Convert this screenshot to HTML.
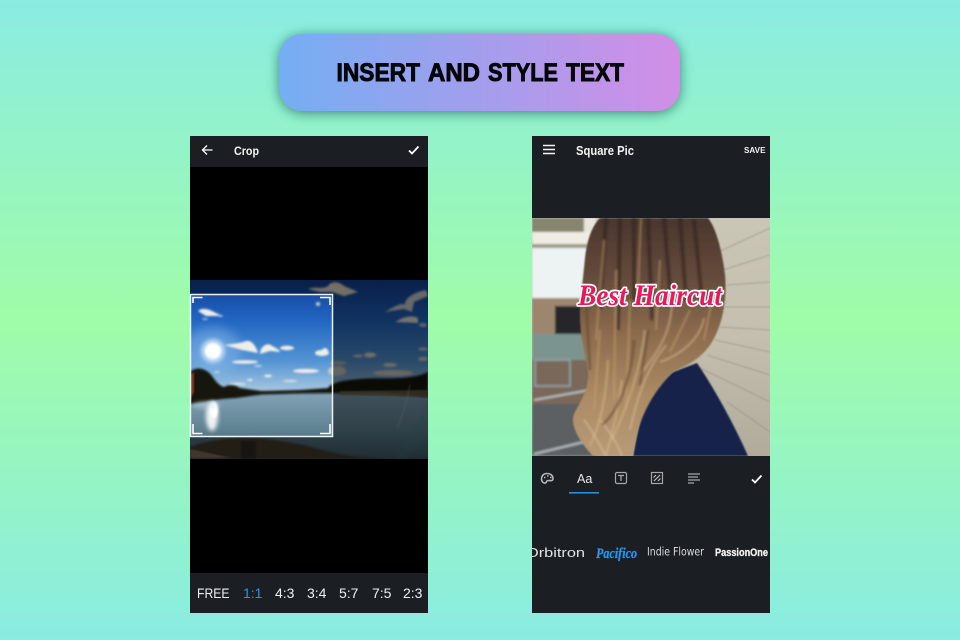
<!DOCTYPE html>
<html><head><meta charset="utf-8"><style>
html,body{margin:0;padding:0;width:960px;height:640px;overflow:hidden;background:#8cebe0}
svg{display:block}
text{font-family:"Liberation Sans",sans-serif}
</style></head><body>
<svg width="960" height="640" viewBox="0 0 960 640" xmlns="http://www.w3.org/2000/svg">
<defs>
<linearGradient id="bg" x1="0" y1="0" x2="0" y2="1"><stop offset="0" stop-color="#8aecE2"/><stop offset=".5" stop-color="#a0fca8"/><stop offset="1" stop-color="#8aecE2"/></linearGradient>
<linearGradient id="ban" x1="0" y1="0" x2="1" y2="0"><stop offset="0" stop-color="#74aef3"/><stop offset="1" stop-color="#d28ee6"/></linearGradient>
<linearGradient id="sky" x1="0" y1="0" x2="0" y2="1"><stop offset="0" stop-color="#113f94"/><stop offset=".35" stop-color="#2166c2"/><stop offset=".7" stop-color="#5494d4"/><stop offset="1" stop-color="#b4cfe2"/></linearGradient>
<linearGradient id="lake" x1="0" y1="0" x2="0" y2="1"><stop offset="0" stop-color="#83a2b6"/><stop offset=".55" stop-color="#5f8293"/><stop offset="1" stop-color="#3f5a66"/></linearGradient>
<linearGradient id="hair" x1="0" y1="0" x2="0" y2="1"><stop offset="0" stop-color="#49362d"/><stop offset=".25" stop-color="#654b3b"/><stop offset=".5" stop-color="#8d6d4e"/><stop offset=".75" stop-color="#ab8b64"/><stop offset="1" stop-color="#b89a76"/></linearGradient>
<linearGradient id="sid" x1="0" y1="0" x2="0" y2="1"><stop offset="0" stop-color="#cac6b6"/><stop offset=".5" stop-color="#c4bfae"/><stop offset="1" stop-color="#b0ab9b"/></linearGradient>
<filter id="b1" x="-30%" y="-30%" width="160%" height="160%"><feGaussianBlur stdDeviation=".7"/></filter>
<filter id="b15" x="-30%" y="-30%" width="160%" height="160%"><feGaussianBlur stdDeviation="1"/></filter>
<filter id="b2" x="-30%" y="-30%" width="160%" height="160%"><feGaussianBlur stdDeviation="2"/></filter>
<filter id="b3" x="-50%" y="-50%" width="200%" height="200%"><feGaussianBlur stdDeviation="5"/></filter>
<filter id="sh" x="-20%" y="-50%" width="140%" height="200%"><feGaussianBlur stdDeviation="6"/></filter>
<clipPath id="cl"><rect x="190" y="280" width="238" height="179"/></clipPath>
<clipPath id="cr"><rect x="532" y="218" width="238" height="238"/></clipPath>
<clipPath id="cf"><rect x="532" y="530" width="238" height="40"/></clipPath>
<clipPath id="chair"><path d="M600 218C592 226 587 240 585 258C583 280 580 300 580 315C580 340 586 355 588 372C589 390 580 402 574 414C570 424 578 440 593 456H633C636 430 645 400 673 372C690 364 702 358 712 342C724 322 727 295 725 275C722 250 716 228 708 218Z"/></clipPath>
</defs>
<rect width="960" height="640" fill="url(#bg)"/>

<!-- banner -->
<rect x="279" y="36" width="401" height="77" rx="24" fill="#14574c" opacity=".7" filter="url(#sh)"/>
<rect x="279" y="34" width="401" height="77" rx="23" fill="url(#ban)"/>
<g font-size="25" font-weight="700" fill="#05050a" stroke="#05050a" stroke-width=".9">
<text x="336.5" y="81" textLength="83.5" lengthAdjust="spacingAndGlyphs">INSERT</text>
<text x="428" y="81" textLength="52" lengthAdjust="spacingAndGlyphs">AND</text>
<text x="488" y="81" textLength="70" lengthAdjust="spacingAndGlyphs">STYLE</text>
<text x="566" y="81" textLength="58" lengthAdjust="spacingAndGlyphs">TEXT</text>
</g>

<!-- left phone -->
<rect x="190" y="136" width="238" height="477" fill="#000"/>
<rect x="190" y="136" width="238" height="31" fill="#1b1f23"/>
<rect x="190" y="573" width="238" height="40" fill="#1b1f23"/>
<path d="M212.5 150H203M207 145.5L202.5 150L207 154.5" fill="none" stroke="#fff" stroke-width="1.3"/>
<text x="234" y="155" font-size="12" font-weight="700" fill="#f4f4f4" textLength="25" lengthAdjust="spacingAndGlyphs">Crop</text>
<path d="M409 150.5L412 153.5L418.5 146.5" fill="none" stroke="#fff" stroke-width="1.8"/>

<g clip-path="url(#cl)">
<rect x="190" y="280" width="238" height="116" fill="url(#sky)"/>
<ellipse cx="213" cy="351" rx="28" ry="24" fill="#8cbcec" opacity=".45" filter="url(#b3)"/>
<g fill="#f0eee8" filter="url(#b15)">
<path d="M198 311C202 307 209 309 216 313L222 316L206 316Z"/><ellipse cx="205" cy="319" rx="3" ry="1" opacity=".6"/><ellipse cx="221" cy="316" rx="2" ry="1" opacity=".6"/>
<path d="M224 345C232 344 242 343 246 341C252 340 256 346 258 353L242 350Z"/><path d="M260 354C260 346 268 342 272 346C276 348 280 350 280 352L270 351Z"/>
<ellipse cx="287" cy="348" rx="7" ry="2.2"/><ellipse cx="322" cy="353" rx="7" ry="3"/><ellipse cx="325" cy="351" rx="3" ry="3"/>
<ellipse cx="245" cy="362" rx="13" ry="1.8"/><ellipse cx="258" cy="366" rx="4" ry="1" opacity=".7"/><ellipse cx="306" cy="371" rx="13" ry="2" /><ellipse cx="268" cy="376" rx="4" ry="1.4"/>
<ellipse cx="250" cy="380" rx="3" ry="1"/><ellipse cx="290" cy="381" rx="7" ry="1.3" opacity=".7"/><ellipse cx="217" cy="372" rx="3" ry="1" opacity=".6"/>
<ellipse cx="238" cy="384" rx="8" ry="1.2" opacity=".8"/><ellipse cx="318" cy="304" rx="2" ry="2" opacity=".8"/><ellipse cx="337" cy="371" rx="9" ry="5" fill="#c8c8c4"/><ellipse cx="338" cy="363" rx="8" ry="2" fill="#b8b4a8"/>
<path d="M308 289C316 286 322 290 328 286C332 280 340 282 344 286L358 292L344 296L332 292L320 292Z" fill="#e8dfc8"/>
<path d="M385 312C395 306 402 302 405 305C404 298 415 292 426 290L428 296L414 302L412 312L404 309Z" fill="#ccd0d2"/>
<path d="M395 322C402 318 410 314 418 318L418 323Z" fill="#e8e8e0"/><ellipse cx="423" cy="325" rx="4" ry="2" opacity=".7"/>
<ellipse cx="370" cy="355" rx="6" ry="2.5" fill="#e4dccc"/><ellipse cx="358" cy="356" rx="5" ry="1.2" fill="#e4dccc"/><ellipse cx="393" cy="373" rx="20" ry="3" fill="#d0ccc4"/>
<ellipse cx="390" cy="365" rx="7" ry="2" fill="#dcd8cc"/><ellipse cx="423" cy="349" rx="5" ry="1.5" fill="#d0d0d0"/><ellipse cx="423" cy="359" rx="5" ry="2" fill="#d0d0d0"/>
</g>
<circle cx="213" cy="351" r="12" fill="#cfe6fb" opacity=".85" filter="url(#b2)"/>
<circle cx="213" cy="351" r="8" fill="#fff" filter="url(#b15)"/>
<rect x="190" y="393" width="238" height="66" fill="url(#lake)"/>
<path d="M190 372C196 366 206 368 212 376C216 382 220 386 224 387C228 384 236 385 240 388L262 391L300 390L328 388C332 382 345 380 360 379C380 377 410 381 428 372V397L380 393L300 393.5L262 394.5L236 398L222 399L190 404Z" fill="#14190f" filter="url(#b15)"/>
<path d="M340 391L428 390V397L340 395Z" fill="#6c684a" opacity=".8" filter="url(#b1)"/>
<path d="M190 375L194 372V392L190 400Z" fill="#b04a30" opacity=".7" filter="url(#b1)"/>
<ellipse cx="212" cy="416" rx="6" ry="15" fill="#fff" opacity=".9" filter="url(#b2)"/>
<ellipse cx="214" cy="410" rx="4" ry="8" fill="#fff" filter="url(#b15)"/>
<ellipse cx="206" cy="405" rx="14" ry="4" fill="#d8e4ea" opacity=".4" filter="url(#b2)"/>
<path d="M190 447C215 437 250 436 280 441C310 445 325 452 345 455C360 458 370 457 390 459H190Z" fill="#443a2c" filter="url(#b15)"/>
<rect x="241" y="441" width="15" height="18" fill="#2e2a22" filter="url(#b1)"/>
<path d="M190 449L232 458H190Z" fill="#8c7a64" opacity=".85" filter="url(#b1)"/>
<path d="M410 385C406 405 401 420 397 428" stroke="#b8bca8" stroke-width="1.5" opacity=".35" fill="none" filter="url(#b1)"/>
<path d="M428 400C424 425 412 445 400 459" stroke="#3c8a80" stroke-width="8" opacity=".25" fill="none" filter="url(#b2)"/>
<path d="M190 280H428V459H190ZM190 294V437H332V294Z" fill-rule="evenodd" fill="#000" opacity=".5"/>
</g>
<rect x="190.5" y="294.5" width="142" height="142" fill="none" stroke="#fff" stroke-width="1.5" opacity=".92"/>
<path d="M193 303V297.5H202.5M320 297.5H330V305M193 424V433.5H202.5M320 433.5H330V424" fill="none" stroke="#fff" stroke-width="1.6"/>
<g font-size="14" fill="#eef0f0">
<text x="197" y="598" textLength="32.5" lengthAdjust="spacingAndGlyphs">FREE</text>
<text x="243" y="598" fill="#2196f3">1:1</text>
<text x="275" y="598">4:3</text>
<text x="307" y="598">3:4</text>
<text x="339" y="598">5:7</text>
<text x="372" y="598">7:5</text>
<text x="403" y="598">2:3</text>
</g>

<!-- right phone -->
<rect x="532" y="136" width="238" height="477" fill="#1b1f23"/>
<path d="M543 145.5H555M543 149.5H555M543 153.5H555" stroke="#f4f4f4" stroke-width="1.5"/>
<text x="576" y="155" font-size="12.5" font-weight="700" fill="#f2f2f2" textLength="58" lengthAdjust="spacingAndGlyphs">Square Pic</text>
<text x="744" y="153" font-size="8.5" font-weight="700" fill="#f2f2f2" textLength="21.5" lengthAdjust="spacingAndGlyphs">SAVE</text>

<g clip-path="url(#cr)">
<rect x="532" y="218" width="238" height="238" fill="url(#sid)"/>
<path d="M712 255L770 228M723 270L770 255M727 285L770 282M725 307L770 307M720 327L770 330M715 340L770 352M707 355L770 375M700 368L770 402M727 402L770 432" stroke="#8e8a7c" stroke-width="1" fill="none" filter="url(#b1)" opacity=".55"/>
<g filter="url(#b15)">
<rect x="532" y="218" width="64" height="238" fill="#e8e6dc"/>
<rect x="532" y="218" width="52" height="14" fill="#86866e"/>
<rect x="532" y="232" width="64" height="12" fill="#f0ece4"/>
<rect x="532" y="244" width="56" height="4" fill="#9c9a8c"/>
<rect x="532" y="248" width="60" height="50" fill="#edf3f2"/>
<rect x="532" y="298" width="60" height="36" fill="#9c8670"/>
<rect x="555" y="306" width="30" height="28" fill="#25282c"/>
<rect x="532" y="334" width="60" height="26" fill="#7c948f"/>
<rect x="532" y="360" width="60" height="44" fill="#7a675a"/>
<path d="M535 360H570V386H535Z" fill="none" stroke="#94a8b0" stroke-width="1.5"/>
<rect x="532" y="404" width="64" height="52" fill="#5c6064"/>
<path d="M534 400L590 390M534 454L592 440" stroke="#b8c0c4" stroke-width="2"/>
</g>
<path d="M643 405C645 395 660 382 673 372L697 363C712 385 732 420 748 456H633C636 440 640 420 643 405Z" fill="#14234a" filter="url(#b1)"/>
<path d="M600 218C592 226 587 240 585 258C583 280 580 300 580 315C580 340 586 355 588 372C589 390 580 402 574 414C570 424 578 440 593 456H633C636 430 645 400 673 372C690 364 702 358 712 342C724 322 727 295 725 275C722 250 716 228 708 218Z" fill="url(#hair)" filter="url(#b1)"/>
<g clip-path="url(#chair)" fill="none" filter="url(#b15)">
<path d="M606 218L600 310M620 218L618 330M634 218L634 300M648 218L652 320M664 218L670 290M680 218L686 300M694 220L702 300" stroke="#2f211b" stroke-width="3.5" opacity=".6"/>
<path d="M604 240L596 340M616 270L614 400M641 218L638 290M630 300L626 410M660 260L656 330M600 330L594 410M712 300L704 340M690 310L670 352" stroke="#c9a16c" stroke-width="2" opacity=".55"/>
<path d="M672 300C672 330 660 350 640 375M645 330C640 370 630 400 612 440M608 360C606 400 600 425 590 445M622 380C618 410 612 435 606 456M704 318C700 340 680 355 660 362" stroke="#d6b888" stroke-width="2" opacity=".6"/>
<path d="M584 420C592 430 600 445 606 456M600 420C610 432 618 445 622 456M666 345C650 365 640 385 630 430" stroke="#dfc9a6" stroke-width="1.5" opacity=".6"/>
<path d="M648 330L640 385M586 300L590 370M634 340C632 375 620 410 602 425" stroke="#5c4230" stroke-width="3" opacity=".5"/>
</g>
</g>
<g font-size="30" font-style="italic" font-weight="700">
<text x="578" y="305" fill="#fff" stroke="#fff" stroke-width="3.4" stroke-linejoin="round" textLength="144" lengthAdjust="spacingAndGlyphs" style="font-family:'Liberation Serif',serif">Best Haircut</text>
<text x="578" y="305" fill="#e8185a" textLength="144" lengthAdjust="spacingAndGlyphs" style="font-family:'Liberation Serif',serif">Best Haircut</text>
</g>

<!-- tool icons -->
<g fill="none" stroke="#b4b6b8">
<path d="M547 473.5C543 473.5 541.5 476.5 541.5 479C541.5 482 544 483.5 545.5 483C547 482.5 546 480.5 548 480.5C550 480.5 553 481.5 553 478.5C553 475.5 550.5 473.5 547 473.5Z" stroke-width="1.6"/>
<path d="M544 477.5h1.5M547 476h1.5M550 477.5h1.5" stroke-width="1.5"/>
<rect x="615.5" y="472.5" width="11" height="11" rx="1.5" stroke="#a4a6a8" stroke-width="1.2"/>
<path d="M618 475.5H624M621 475.5V481" stroke-width="1.3" stroke="#a4a6a8"/>
<rect x="651.5" y="472.5" width="11" height="11" stroke-width="1.2" stroke="#a4a6a8"/>
<path d="M654 481L660 475M653.5 477.5L656 475M658 481L660.5 478.5" stroke-width="1.2" stroke="#c0c0c0"/>
<path d="M688 474H700M688 477H698M688 480H700M688 483H694" stroke-width="1.5" stroke="#8e9092"/>
</g>
<text x="577" y="483" font-size="12.5" fill="#e8e8e8">Aa</text>
<rect x="569" y="492" width="30" height="1.6" fill="#2190e4"/>
<path d="M752 479.5L755 482.5L761.5 475.5" fill="none" stroke="#fff" stroke-width="1.8"/>

<g clip-path="url(#cf)">
<text x="526" y="557" font-size="12.5" fill="#dfe2e4" textLength="59" lengthAdjust="spacingAndGlyphs">Orbitron</text>
<text x="596" y="558" font-size="15" font-weight="700" font-style="italic" fill="#2196f3" stroke="#2196f3" stroke-width=".3" textLength="41" lengthAdjust="spacingAndGlyphs" style="font-family:'Liberation Serif',serif">Pacifico</text>
<text x="647" y="555.5" font-size="11.5" fill="#dadcde" textLength="57" lengthAdjust="spacingAndGlyphs" style="font-family:'DejaVu Sans',sans-serif">Indie Flower</text>
<text x="715" y="556" font-size="11" font-weight="700" fill="#f2f2f2" stroke="#f2f2f2" stroke-width=".3" textLength="53" lengthAdjust="spacingAndGlyphs">PassionOne</text>
</g>
</svg>
</body></html>
